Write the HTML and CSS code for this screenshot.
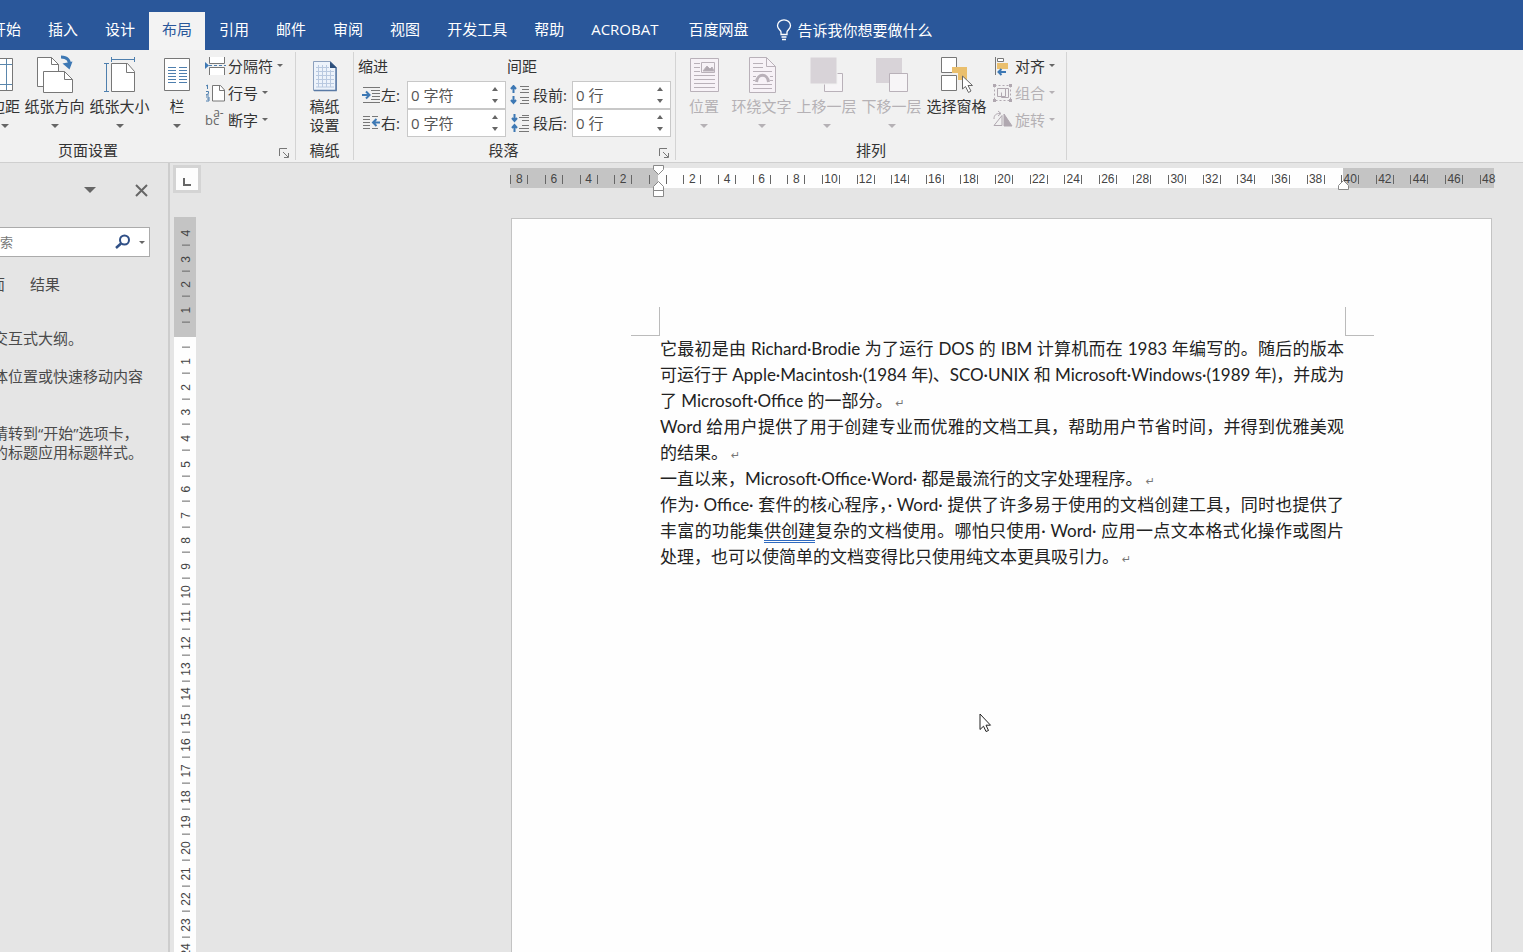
FILE: index.html
```html
<!DOCTYPE html>
<html lang="zh-CN">
<head>
<meta charset="utf-8">
<title>Word</title>
<link rel="stylesheet" href="styles.css">
</head>
<body>
<header class="tabbar">
  <nav class="tabs">
    <button class="tab">开始</button><button class="tab">插入</button><button class="tab">设计</button><button class="tab tab-active">布局</button><button class="tab">引用</button><button class="tab">邮件</button><button class="tab">审阅</button><button class="tab">视图</button><button class="tab">开发工具</button><button class="tab">帮助</button><button class="tab">ACROBAT</button><button class="tab tab-wide">百度网盘</button>
    <button class="tab tell-me">
      <svg width="16" height="22" viewBox="0 0 16 22" fill="none" stroke="#fff" stroke-width="1.3"><path d="M5 15.500V13C5 11.500 1.500 10 1.500 6.800a6.500 6 0 0 1 13 0C14.500 10 11 11.500 11 13v2.500zM5.500 18h5M6 20.500h4"/></svg>
      告诉我你想要做什么
    </button>
  </nav>
</header>

<section class="ribbon">
  <div class="group group-setup">
    <div class="group-body">
      <button class="big big-margins">
        <svg width="40" height="40" viewBox="9 0 40 40" fill="none"><path d="M2.500 3.500h34v32h-34z" fill="#fff" stroke="#777"/><path d="M8.500 4v31M30.500 4v31M3 9.500h33M3 29.500h33" stroke="#5b87ad"/></svg>
        <span>边距</span><i class="caret"></i>
      </button>
      <button class="big">
        <svg width="40" height="40" viewBox="0 0 40 40" fill="none" stroke="#777"><path d="M2.500 31.500v-29h14l7 7v12h-15v10z" fill="#fff"/><path d="M16.500 2.500v7h7" /><path d="M8.500 16.500h21l8 8v13h-29z" fill="#fff"/><path d="M29.500 16.500v8h8"/><path d="M26 2c6 0 9 3 8.500 9" stroke="#3d78b4" stroke-width="3"/><path d="M27.500 8.500l7 6 3-8" fill="#3d78b4" stroke="none"/></svg>
        <span>纸张方向</span><i class="caret"></i>
      </button>
      <button class="big">
        <svg width="40" height="40" viewBox="0 0 40 40" fill="none" stroke="#777"><path d="M11.500 8.500h16l7 8v20h-23z" fill="#fff"/><path d="M26.500 8.500v9h8"/><path d="M11.500 4.500h23M11.500 2v5M34.500 2v5M6.500 9v27M4 8.500h5M4 36.500h5" stroke="#4e7fae"/></svg>
        <span>纸张大小</span><i class="caret"></i>
      </button>
      <button class="big big-narrow">
        <svg width="40" height="40" viewBox="0 0 40 40" fill="none"><path d="M7.500 3.500h25v32h-25z" fill="#fff" stroke="#777"/><path d="M11 12.500h8M11 15.500h8M11 18.500h8M11 21.500h8M11 24.500h8M11 27.500h8M22 12.500h8M22 15.500h8M22 18.500h8M22 21.500h8M22 24.500h8M22 27.500h8" stroke="#4e7fae"/></svg>
        <span>栏</span><i class="caret"></i>
      </button>
      <div class="stack">
        <button class="small">
          <svg width="22" height="20" viewBox="0 0 22 20" fill="none" stroke="#777"><path d="M4.500 1v6.500h15V1M4.500 19v-7.500h15V19" fill="#fff"/><path d="M4 9.500h3M9 9.500h3M14 9.500h3M19 9.500h2" stroke="#4e7fae"/><path d="M0 6l4 3.500-4 3.500z" fill="#3d78b4" stroke="none"/></svg>
          <span>分隔符</span><i class="caret"></i>
        </button>
        <button class="small">
          <svg width="22" height="20" viewBox="0 0 22 20" fill="none" stroke="#777"><path d="M7.500 2.500h8l4 4.500v11h-12z" fill="#fff"/><path d="M14.500 2.500v5h5"/><path d="M1 3l1.500-1v4M1 8.500h2.500v2L1 12h3M1 14h3v4H1M2 16h2" stroke="#4e7fae"/></svg>
          <span>行号</span><i class="caret"></i>
        </button>
        <button class="small">
          <span class="hyphen-icon">bc<sup>a-</sup></span>
          <span>断字</span><i class="caret"></i>
        </button>
      </div>
    </div>
    <div class="group-foot"><span>页面设置</span><button class="launcher" aria-label="页面设置"><svg width="11" height="11" viewBox="0 0 11 11" fill="none" stroke="#777"><path d="M.5 8V.5H8M4 4l5 5M9.500 5v4.500H5"/></svg></button></div>
  </div>

  <div class="group group-paper">
    <div class="group-body">
      <button class="big big-two">
        <svg width="40" height="40" viewBox="0 0 40 40" fill="none"><path d="M8.500 5.500h17l6 6v23h-23z" fill="#edf3fb" stroke="#8ca0bd"/><path d="M31 12v22.500H9" stroke="#5a7aa5" stroke-width="1.500"/><path d="M25 5.500v6.500h7z" fill="#2d4f7b"/><path d="M11 11.500h13M11 15.500h18M11 19.500h18M11 23.500h18M11 27.500h18M11 31h18M13.500 9v22M17.500 9v22M21.500 9v22M25.500 14v17" stroke="#b9c9e0"/></svg>
        <span>稿纸</span><span>设置</span>
      </button>
    </div>
    <div class="group-foot"><span>稿纸</span></div>
  </div>

  <div class="group group-para">
    <div class="group-body para-body">
      <div class="para-col">
        <div class="para-title">缩进</div>
        <div class="field">
          <svg width="22" height="20" viewBox="0 0 22 20" fill="none" stroke="#777"><path d="M5 2.500h17M13 5.500h9M14 8.500h8M14 11.500h8M13 14.500h9M5 17.500h17"/><path d="M4 10h7M8 6.500l3.500 3.500L8 13.500" stroke="#3d78b4" stroke-width="2"/></svg>
          <label for="left">左:</label>
          <div class="spin"><input id="left" value="0 字符"><div class="arrows"><button class="up" aria-label="增加"></button><button class="down" aria-label="减少"></button></div></div>
        </div>
        <div class="field">
          <svg width="22" height="20" viewBox="0 0 22 20" fill="none" stroke="#777"><path d="M5 3.500h7M14 3.500h6M5 6.500h7M5 9.500h7M5 12.500h7M5 15.500h7M14 15.500h6"/><path d="M22 9.500h-6M18.500 6L15 9.500l3.500 3.500" stroke="#3d78b4" stroke-width="2"/></svg>
          <label for="right">右:</label>
          <div class="spin"><input id="right" value="0 字符"><div class="arrows"><button class="up" aria-label="增加"></button><button class="down" aria-label="减少"></button></div></div>
        </div>
      </div>
      <div class="para-col para-col-wide">
        <div class="para-title">间距</div>
        <div class="field">
          <svg width="22" height="20" viewBox="0 0 22 20" fill="none" stroke="#777"><path d="M10 1.500h9M12 4.500h7M10 7.500h9M10 12.500h9M12 15.500h7M10 18.500h9"/><path d="M3.500 8V1M1 4l2.500-3L6 4M3.500 11v7M1 15l2.500 3L6 15" stroke="#3d78b4" stroke-width="2"/></svg>
          <label for="before">段前:</label>
          <div class="spin"><input id="before" value="0 行"><div class="arrows"><button class="up" aria-label="增加"></button><button class="down" aria-label="减少"></button></div></div>
        </div>
        <div class="field">
          <svg width="22" height="20" viewBox="0 0 22 20" fill="none" stroke="#777"><path d="M12 2.500h7M9 4.500h10M12 7.500h7M12 12.500h7M9 15.500h10M9 18.500h10"/><path d="M4.500 1v7M2 5l2.500 3L7 5M4.500 19v-6M2 15l2.500-3L7 15" stroke="#3d78b4" stroke-width="2"/></svg>
          <label for="after">段后:</label>
          <div class="spin"><input id="after" value="0 行"><div class="arrows"><button class="up" aria-label="增加"></button><button class="down" aria-label="减少"></button></div></div>
        </div>
      </div>
    </div>
    <div class="group-foot"><span>段落</span><button class="launcher" aria-label="段落"><svg width="11" height="11" viewBox="0 0 11 11" fill="none" stroke="#777"><path d="M.5 8V.5H8M4 4l5 5M9.500 5v4.500H5"/></svg></button></div>
  </div>

  <div class="group group-arrange">
    <div class="group-body">
      <button class="big big-narrow" disabled>
        <svg width="40" height="40" viewBox="0 0 40 40" fill="none" stroke="#b9b1b9"><path d="M6.500 3.500h28v33h-28z" fill="#f7f2f7"/><path d="M10 8.500h6M10 12.500h6M10 16.500h6M10 20.500h21M10 24.500h21M10 28.500h21M10 32.500h21M17.500 7.500h13v10h-13z"/><path d="M19 16l4-5 3 3 2-2 2 4z" fill="#b0a8b0"/></svg>
        <span>位置</span><i class="caret"></i>
      </button>
      <button class="big" disabled>
        <svg width="40" height="40" viewBox="0 0 40 40" fill="none" stroke="#b9b1b9"><path d="M7.500 2.500h17l9 9v26h-26z" fill="#f7f2f7"/><path d="M24.500 2.500v9h9M11 8.500h10M11 12.500h10M11 16.500h19M11 21.500h3M28 21.500h3M11 25.500h2M28 25.500h3M11 29.500h19M11 33.500h19"/><path d="M14.500 27c1-9 11-9 12 0" stroke-width="3"/></svg>
        <span>环绕文字</span><i class="caret"></i>
      </button>
      <button class="big" disabled>
        <svg width="40" height="40" viewBox="0 0 40 40" fill="none"><path d="M17.500 18.500h18v18h-18z" fill="#f7f5f7" stroke="#b9b1b9"/><path d="M3 2h27v27H3z" fill="#d8d3d8" stroke="#f1f1f1"/></svg>
        <span>上移一层</span><i class="caret"></i>
      </button>
      <button class="big" disabled>
        <svg width="40" height="40" viewBox="0 0 40 40" fill="none"><path d="M4 3h26v25H4z" fill="#d8d3d8"/><path d="M17.500 18.500h18v18h-18z" fill="#f7f5f7" stroke="#b9b1b9"/></svg>
        <span>下移一层</span><i class="caret"></i>
      </button>
      <button class="big">
        <svg width="40" height="40" viewBox="0 0 40 40" fill="none"><path d="M4.500 2.500h15v15h-15zM4.500 20.500h15v15h-15z" fill="#fff" stroke="#777"/><path d="M15 12h15v13h-9v-7h-6z" fill="#eabf6d"/><path d="M25.500 21v13l3-2.500 3 6 2.500-1.500-3-5.500h4.500z" fill="#fff" stroke="#666"/></svg>
        <span>选择窗格</span>
      </button>
      <div class="stack">
        <button class="small">
          <svg width="22" height="20" viewBox="0 0 22 20" fill="none"><path d="M3.500 1v18" stroke="#777"/><path d="M5.500 2.500h6v3h-6z" fill="#fff" stroke="#777"/><path d="M5 7h11v6H5z" fill="#eabf6d"/><path d="M14 16H7M9.500 13L6.500 16l3 3" stroke="#3d78b4" stroke-width="2"/></svg>
          <span>对齐</span><i class="caret"></i>
        </button>
        <button class="small" disabled>
          <svg width="22" height="20" viewBox="0 0 22 20" fill="none" stroke="#b0a8b0"><path d="M5.500 5.500h8v8h-8zM9.500 9.500v5h7v-9h-3"/><path d="M2.500 2.500h16v15h-16z" stroke-dasharray="2 2"/><path d="M1 1h3v3H1zM17 1h3v3h-3zM1 16h3v3H1zM17 16h3v3h-3z" fill="#b0a8b0" stroke="none"/></svg>
          <span>组合</span><i class="caret"></i>
        </button>
        <button class="small" disabled>
          <svg width="22" height="20" viewBox="0 0 22 20" fill="none" stroke="#b0a8b0"><path d="M2 15.500h8v-10z"/><path d="M12 4v12h8z" fill="#b0a8b0"/><path d="M2 9c0-4 2-5.500 6-5.500M6 1l3 2.500L6 6"/></svg>
          <span>旋转</span><i class="caret"></i>
        </button>
      </div>
    </div>
    <div class="group-foot"><span>排列</span></div>
  </div>
</section>

<main class="workspace">
  <aside class="pane">
    <div class="pane-top">
      <button class="pane-menu" aria-label="选项"></button>
      <button class="pane-close" aria-label="关闭"><svg width="13" height="13" viewBox="0 0 13 13" stroke="#666" stroke-width="2"><path d="M1 1l11 11M12 1L1 12"/></svg></button>
    </div>
    <div class="search">
      <input placeholder="搜索" aria-label="搜索">
      <svg width="16" height="16" viewBox="0 0 16 16" fill="none" stroke="#2f4f86"><circle cx="9.500" cy="6" r="4.500" stroke-width="2"/><path d="M6 9.500L1 14" stroke-width="2.500"/></svg>
      <i class="caret"></i>
    </div>
    <div class="pane-tabs"><button>页面</button><button>结果</button></div>
    <div class="pane-help">
      <p>交互式大纲。</p>
      <p>体位置或快速移动内容</p>
      <p class="pane-tip">请转到“开始”选项卡，<br>的标题应用标题样式。</p>
    </div>
  </aside>

  <div class="rail">
    <button class="tab-stop" aria-label="制表符"><svg width="9" height="9" viewBox="0 0 9 9" fill="none" stroke="#666" stroke-width="2"><path d="M1 1v7h7"/></svg></button>
    <div class="vruler"><div class="vscale">
      <b>4</b><b>3</b><b>2</b><b>1</b><b></b><b>1</b><b>2</b><b>3</b><b>4</b><b>5</b><b>6</b><b>7</b><b>8</b><b>9</b><b>10</b><b>11</b><b>12</b><b>13</b><b>14</b><b>15</b><b>16</b><b>17</b><b>18</b><b>19</b><b>20</b><b>21</b><b>22</b><b>23</b><b>24</b>
    </div></div>
  </div>

  <div class="canvas">
    <div class="hruler">
      <div class="hscale">
        <b>8</b><b>6</b><b>4</b><b>2</b><b></b><b>2</b><b>4</b><b>6</b><b>8</b><b>10</b><b>12</b><b>14</b><b>16</b><b>18</b><b>20</b><b>22</b><b>24</b><b>26</b><b>28</b><b>30</b><b>32</b><b>34</b><b>36</b><b>38</b><b>40</b><b>42</b><b>44</b><b>46</b><b class="open">48</b>
      </div>
      <svg class="mark mark-left" width="12" height="32" viewBox="0 0 12 32" fill="#fff" stroke="#888"><path d="M.5.500h10v4l-5 5-5-5zM.5 25.500v-4l5-5 5 5v4zM.5 25.500h10v6h-10z"/></svg>
      <svg class="mark mark-right" width="12" height="32" viewBox="0 0 12 32" fill="#fff" stroke="#888"><path d="M.5 25.500v-4l5-5 5 5v4z"/></svg>
    </div>
    <article class="page">
      <i class="crop crop-left"></i><i class="crop crop-right"></i>
      <p>
        <span class="line full">它最初是由 Richard·Brodie 为了运行 DOS 的 IBM 计算机而在 1983 年编写的。随后的版本</span>
        <span class="line full unbroken">可运行于 Apple·Macintosh·(1984 年)、SCO·UNIX 和 Microsoft·Windows·(1989 年)，并成为</span>
        <span class="line">了 Microsoft·Office 的一部分。<i class="ret">↵</i></span>
      </p>
      <p>
        <span class="line full">Word 给用户提供了用于创建专业而优雅的文档工具，帮助用户节省时间，并得到优雅美观</span>
        <span class="line">的结果。<i class="ret">↵</i></span>
      </p>
      <p><span class="line">一直以来，Microsoft·Office·Word· 都是最流行的文字处理程序。<i class="ret">↵</i></span></p>
      <p>
        <span class="line full">作为· Office· 套件的核心程序，· Word· 提供了许多易于使用的文档创建工具，同时也提供了</span>
        <span class="line full">丰富的功能集<u>供创建</u>复杂的文档使用。哪怕只使用· Word· 应用一点文本格式化操作或图片</span>
        <span class="line">处理，也可以使简单的文档变得比只使用纯文本更具吸引力。<i class="ret">↵</i></span>
      </p>
      <svg class="pointer" width="13" height="20" viewBox="0 0 13 20"><path d="M1 1v15.500l3.500-3.300 2.500 5.300 2.500-1-2.500-5.300h4.500z" fill="#fff" stroke="#222"/></svg>
    </article>
  </div>
</main>
</body>
</html>
```
FILE: styles.css
```css
* { box-sizing: border-box; }
body {
  margin: 0;
  height: 100vh;
  display: flex;
  flex-direction: column;
  overflow: hidden;
  background: #e5e5e5;
  color: #333;
  font: 15px/20px "Open Sans", "Noto Sans CJK SC", sans-serif;
}
button {
  margin: 0;
  padding: 0;
  border: 0;
  background: none;
  color: inherit;
  font: inherit;
  white-space: nowrap;
}
svg { display: block; flex: none; }
p { margin: 0; }

/* Tab bar */
.tabbar { background: #2a579a; padding-top: 12px; flex: none; }
.tabs { display: flex; gap: 1px; margin-left: -22px; color: #fff; }
.tab { height: 38px; padding: 0 13px 4px; flex: none; }
.tab-active { background: #f3f3f3; color: #2a579a; }
.tab-wide { padding: 0 14px 4px 16px; }
.tell-me { display: flex; align-items: center; gap: 5px; padding: 0 13px 2px; }

/* Ribbon */
.ribbon {
  display: flex;
  flex: none;
  height: 113px;
  background: #f1f1f1;
  border-bottom: 1px solid #cfcfcf;
  padding: 2px 0;
}
.group { display: flex; flex-direction: column; flex: none; position: relative; border-right: 1px solid #d4d4d4; }
.group-body { display: flex; flex: 1; }
.group-foot { display: flex; justify-content: center; align-items: center; height: 20px; }
.group-setup { width: 415px; margin-left: -119px; }
.group-setup .group-body { justify-content: flex-end; padding-right: 8px; }
.group-paper { width: 58px; }
.group-para { width: 322px; }
.group-para .group-foot { padding-right: 22px; }
.group-arrange { width: 391px; }
.group-arrange .group-body { justify-content: flex-end; padding-right: 8px; }
.launcher { position: absolute; right: 5px; bottom: 1px; }
.big { display: flex; flex-direction: column; align-items: center; width: 65px; padding-top: 3px; }
.big svg { margin-bottom: 1px; }
.big-narrow { width: 50px; }
.big-margins { width: 34px; }
.big-two { width: 100%; padding-top: 4px; line-height: 19px; }
.caret { border: solid transparent; border-width: 4px 4px 0; border-top-color: #666; flex: none; }
.big .caret { margin-top: 8px; }
.small .caret { border-width: 3px 3px 0; border-top-color: #666; margin-left: 3px; }
button:disabled { color: #b5b1b5; }
button:disabled .caret, .small:disabled .caret { border-top-color: #b5b1b5; }
.stack { display: flex; flex-direction: column; width: 82px; margin-left: 3px; }
.group-arrange .stack { width: 66px; }
.small { display: flex; align-items: center; gap: 1px; height: 27px; }
.hyphen-icon { width: 22px; font-size: 13px; line-height: 20px; color: #666; text-align: left; }
.hyphen-icon sup { font-size: 12px; line-height: 0; margin-left: -6px; vertical-align: 8px; }

.para-body { gap: 1px; padding: 0 4px; }
.para-col { width: 150px; }
.para-col-wide { width: 165px; }
.para-col-wide .field { padding-left: 3px; }
.para-title { height: 29px; line-height: 29px; }
.field { display: flex; align-items: center; justify-content: flex-end; height: 28px; }
.field label { margin: 0 5px 0 1px; flex: 1; white-space: nowrap; }
.spin { display: flex; width: 99px; height: 28px; border: 1px solid #c8c8c8; background: #fff; }
.spin input { width: 78px; min-width: 0; border: 0; padding: 0 0 0 3px; font: inherit; color: #555; background: none; }
.arrows { display: flex; flex-direction: column; justify-content: space-between; padding: 5px 6px; }
.up, .down { border: solid transparent; border-width: 0 3px 4px; border-bottom-color: #666; }
.down { border-width: 4px 3px 0; border-top-color: #666; }

/* Workspace */
.workspace { display: flex; flex: 1; min-height: 0; }
.pane { width: 170px; flex: none; border-right: 2px solid #cdcdcd; overflow: hidden; color: #4a4a4a; }
.pane-top { display: flex; justify-content: flex-end; align-items: center; gap: 39px; padding: 20px 20px 0 0; height: 34px; }
.pane-menu { border: solid transparent; border-width: 6px 6px 0; border-top-color: #666; }
.search { display: flex; align-items: center; gap: 8px; height: 30px; margin: 30px 18px 0 -18px; padding: 0 4px; border: 1px solid #ababab; background: #fff; }
.search input { flex: 1; min-width: 0; border: 0; padding: 0; font: inherit; font-size: 13px; background: none; }
.search input::placeholder { color: #777; opacity: 1; }
.search .caret { border-width: 3px 3px 0; }
.pane-tabs { display: flex; gap: 25px; margin: 17px 0 0 -25px; }
.pane-help { margin: 35px 0 0 -7px; white-space: nowrap; line-height: 19px; }
.pane-help p { margin-bottom: 19px; }
.pane-help .pane-tip { margin-top: 38px; }

.rail { width: 32px; flex: none; display: flex; flex-direction: column; padding: 2px 0 0 3px; }
.tab-stop { width: 28px; height: 28px; flex: none; border: 3px solid #d4d4d4; background: #fdfdfd; display: flex; align-items: center; justify-content: center; padding-top: 4px; }
.vruler { width: 22px; margin: 24px 0 0 1px; padding-left: 2px; flex: 1; min-height: 0; background: linear-gradient(#c4c4c4 120px, #fefefe 0); }
.vscale { display: grid; grid-auto-rows: 1fr; height: calc(100% + 11px); padding-top: 3px; }
.vscale b {
  display: flex;
  align-items: center;
  justify-content: center;
  min-height: 0;
  writing-mode: vertical-rl;
  transform: rotate(180deg);
  background: linear-gradient(#666, #666) center top / 8px 1px no-repeat;
  font: 12px/12px "Liberation Sans", sans-serif;
  color: #444;
}

.canvas { flex: 1; min-width: 0; display: flex; flex-direction: column; padding: 5px 31px 0 308px; }
.hruler { position: relative; flex: none; height: 20px; margin-right: -2px; background: linear-gradient(90deg, #c4c4c4 148px, #fefefe 0 calc(100% - 151px), #c4c4c4 0); }
.hscale { display: grid; grid-auto-flow: column; grid-auto-columns: 1fr; margin: 0 -12px 0 -8px; padding-top: 7px; justify-items: center; }
.hscale b { width: 18px; height: 9px; border: solid #666; border-width: 0 1px; text-align: center; font: 12px/9px "Liberation Sans", sans-serif; color: #444; }
.hscale .open { border-right-color: transparent; }
.mark { position: absolute; top: -3px; }
.mark-left { left: 143px; }
.mark-right { right: 144px; top: -4px; }

.page { position: relative; flex: 1; margin: 30px 0 0 1px; padding: 117px 147px 0 148px; background: #fefefe; border: 1px solid #c3c3c3; border-bottom: 0; font: 17px/26px Lato, "Noto Sans CJK SC", sans-serif; color: #222; }
.line { display: block; }
.full { text-align: justify; text-align-last: justify; }
.unbroken { white-space: nowrap; }
.page u { text-decoration: none; border-bottom: 3px double #2f6ac0; line-height: 18px; display: inline-block; }
.ret { font: 11px/12px "DejaVu Sans", sans-serif; color: #777; margin-left: 3px; }
.crop { position: absolute; top: 88px; width: 29px; height: 29px; border: solid #bbb; }
.crop-left { left: 119px; border-width: 0 1px 1px 0; }
.crop-right { right: 117px; border-width: 0 0 1px 1px; }
.pointer { position: absolute; left: 467px; top: 494px; }
```
